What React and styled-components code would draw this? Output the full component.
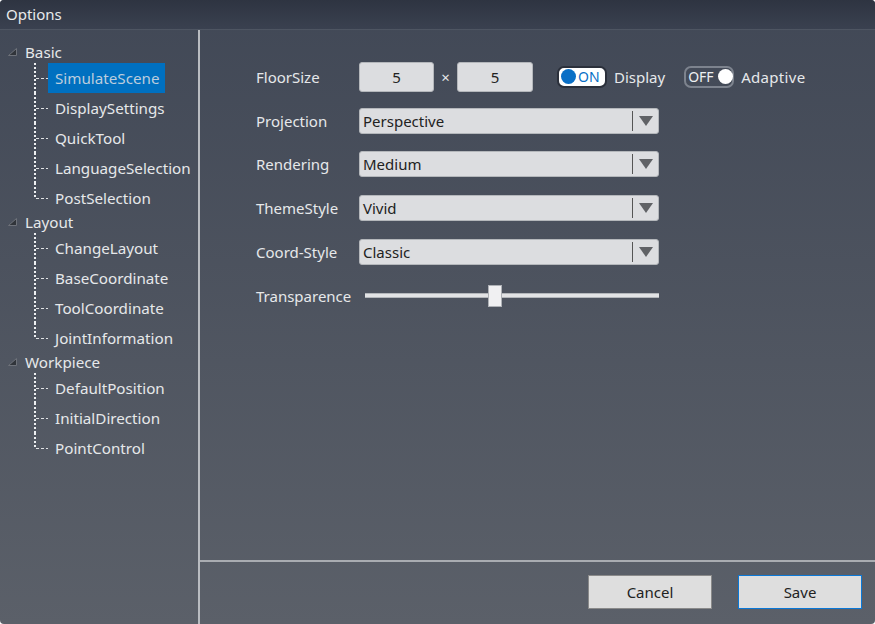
import React from 'react'
import styled, { createGlobalStyle } from 'styled-components'

const Global = createGlobalStyle`
html, body { margin: 0; padding: 0; background: #fff; }
body { font-family: "Noto Sans", "Open Sans", "Liberation Sans", sans-serif; }
* { box-sizing: border-box; }
`

const Window = styled.div`
width: 875px;
height: 624px;
display: flex;
flex-direction: column;
overflow: hidden;
border-radius: 4px;
color: #e6e8ea;
background: linear-gradient(180deg, #414856 0%, #5b6069 100%);
`

const TitleBar = styled.div`
height: 30px;
flex: none;
padding: 0 0 2px 6px;
display: flex;
align-items: center;
font-size: 15px;
color: #e8eaec;
background: linear-gradient(180deg, #2e3441 0%, #3a4150 100%);
border-bottom: 1px solid #4e5562;
`

const Body = styled.div`
flex: 1;
display: flex;
min-height: 0;
`

const Sidebar = styled.div`
width: 200px;
flex: none;
padding: 13px 0 0 8px;
border-right: 2px solid #b9bcc1;
font-size: 15.2px;
`

const GroupRow = styled.div`
height: 20px;
padding-bottom: 2px;
display: flex;
align-items: center;
gap: 8px;
`

const ChildRow = styled.div`
height: 30px;
margin-left: 26px;
display: flex;
align-items: center;
`

const ChildLabel = styled.div`
height: 30px;
padding: 0 6px 0 7px;
display: flex;
align-items: center;
white-space: nowrap;
color: ${p => (p.$selected ? '#bccddd' : '#e6e8ea')};
background: ${p => (p.$selected ? '#0070c0' : 'transparent')};
`

const Main = styled.div`
flex: 1;
display: flex;
flex-direction: column;
min-width: 0;
`

const Form = styled.div`
flex: 1;
padding: 25px 0 0 56px;
font-size: 15px;
`

const FormRow = styled.div`
height: 43.8px;
display: flex;
align-items: center;
`

const Label = styled.div`
width: 103px;
flex: none;
white-space: nowrap;
`

const NumberBox = styled.div`
width: ${p => p.$w}px;
height: 30px;
display: flex;
align-items: center;
justify-content: center;
color: #222;
background: #dcdde0;
border: 1px solid #b4b7bb;
border-radius: 3px;
`

const Times = styled.div`
width: 23px;
text-align: center;
font-size: 15px;
`

const Toggle = styled.div`
width: 50px;
height: 22px;
flex: none;
margin-left: ${p => p.$gap}px;
padding: 0 1px 0 2px;
display: flex;
align-items: center;
gap: ${p => (p.$on ? 2 : 4)}px;
font-size: 14px;
border-radius: 7px;
border: 2px solid ${p => (p.$on ? '#2b303b' : '#7d838e')};
color: ${p => (p.$on ? '#0a6fc6' : '#eef0f2')};
background: ${p => (p.$on ? '#ffffff' : 'transparent')};
`

const Knob = styled.div`
width: 15px;
height: 15px;
flex: none;
border-radius: 50%;
background: ${p => (p.$on ? '#0a6fc6' : '#ffffff')};
`

const ToggleText = styled.div`
margin-left: 7px;
white-space: nowrap;
letter-spacing: ${p => p.$spacing || 0}px;
`

const Select = styled.div`
width: 300px;
height: 26px;
padding-left: 3px;
display: flex;
align-items: center;
color: #222;
background: #dcdde0;
border: 1px solid #b4b7bb;
border-radius: 3px;
`

const SelectValue = styled.div`
flex: 1;
`

const SelectDivider = styled.div`
width: 1px;
height: 20px;
background: #555;
`

const SelectArrow = styled.div`
width: 25px;
display: flex;
justify-content: center;
`

const SliderWrap = styled.div`
width: 294px;
height: 22px;
margin-left: 6px;
display: flex;
align-items: center;
`

const SliderFill = styled.div`
height: 5px;
background: #e2e3e5;
border-top: 1px solid #b4b7bb;
border-bottom: 1px solid #b4b7bb;
`

const SliderThumb = styled.div`
width: 14px;
height: 22px;
flex: none;
background: #f0f0f2;
border: 1px solid #aeb1b6;
`

const Footer = styled.div`
height: 64px;
flex: none;
padding: 0 13px 2px 0;
display: flex;
align-items: center;
justify-content: flex-end;
gap: 26px;
border-top: 2px solid #a9acb1;
`

const Button = styled.div`
width: 124px;
height: 34px;
display: flex;
align-items: center;
justify-content: center;
font-size: 15px;
color: #222;
background: #dedede;
border: 1px solid ${p => (p.$primary ? '#0a78d7' : '#8a8a8a')};
`

const Arrow = () => (
  <svg width="9" height="8" viewBox="0 0 9 8">
    <path d="M8.5 0.5V7.5H0.5Z" fill="#30343a" stroke="#6e727a" strokeWidth="1" />
  </svg>
)

const Connector = ({ last }) => (
  <svg width="14" height="30" viewBox="0 0 14 30" style={{ flex: 'none' }}>
    <path d={last ? 'M1 0V15' : 'M1 0V30'} stroke="#eef0f2" strokeWidth="2" strokeDasharray="2 2" fill="none" />
    <path d="M2 15.5H14" stroke="#e0e2e4" strokeWidth="1" strokeDasharray="3 2" fill="none" />
  </svg>
)

const Caret = () => (
  <svg width="14" height="10" viewBox="0 0 14 10">
    <path d="M0 0H14L7 10Z" fill="#606266" />
  </svg>
)

const tree = [
  { name: 'Basic', items: ['SimulateScene', 'DisplaySettings', 'QuickTool', 'LanguageSelection', 'PostSelection'] },
  { name: 'Layout', items: ['ChangeLayout', 'BaseCoordinate', 'ToolCoordinate', 'JointInformation'] },
  { name: 'Workpiece', items: ['DefaultPosition', 'InitialDirection', 'PointControl'] },
]

const selects = [
  ['Projection', 'Perspective'],
  ['Rendering', 'Medium'],
  ['ThemeStyle', 'Vivid'],
  ['Coord-Style', 'Classic'],
]

export default function App() {
  return (
    <Window>
      <Global />
      <TitleBar>Options</TitleBar>
      <Body>
        <Sidebar>
          {tree.map(group => (
            <div key={group.name}>
              <GroupRow><Arrow />{group.name}</GroupRow>
              {group.items.map((item, i) => (
                <ChildRow key={item}>
                  <Connector last={i === group.items.length - 1} />
                  <ChildLabel $selected={item === 'SimulateScene'}>{item}</ChildLabel>
                </ChildRow>
              ))}
            </div>
          ))}
        </Sidebar>
        <Main>
          <Form>
            <FormRow>
              <Label>FloorSize</Label>
              <NumberBox $w={75}>5</NumberBox>
              <Times>×</Times>
              <NumberBox $w={76}>5</NumberBox>
              <Toggle $on $gap={24}><Knob $on />ON</Toggle>
              <ToggleText>Display</ToggleText>
              <Toggle $gap={19}>OFF<Knob /></Toggle>
              <ToggleText $spacing={0.3}>Adaptive</ToggleText>
            </FormRow>
            {selects.map(([label, value]) => (
              <FormRow key={label}>
                <Label>{label}</Label>
                <Select>
                  <SelectValue>{value}</SelectValue>
                  <SelectDivider />
                  <SelectArrow><Caret /></SelectArrow>
                </Select>
              </FormRow>
            ))}
            <FormRow>
              <Label>Transparence</Label>
              <SliderWrap>
                <SliderFill style={{ width: 123 }} />
                <SliderThumb />
                <SliderFill style={{ flex: 1 }} />
              </SliderWrap>
            </FormRow>
          </Form>
          <Footer>
            <Button>Cancel</Button>
            <Button $primary>Save</Button>
          </Footer>
        </Main>
      </Body>
    </Window>
  )
}
